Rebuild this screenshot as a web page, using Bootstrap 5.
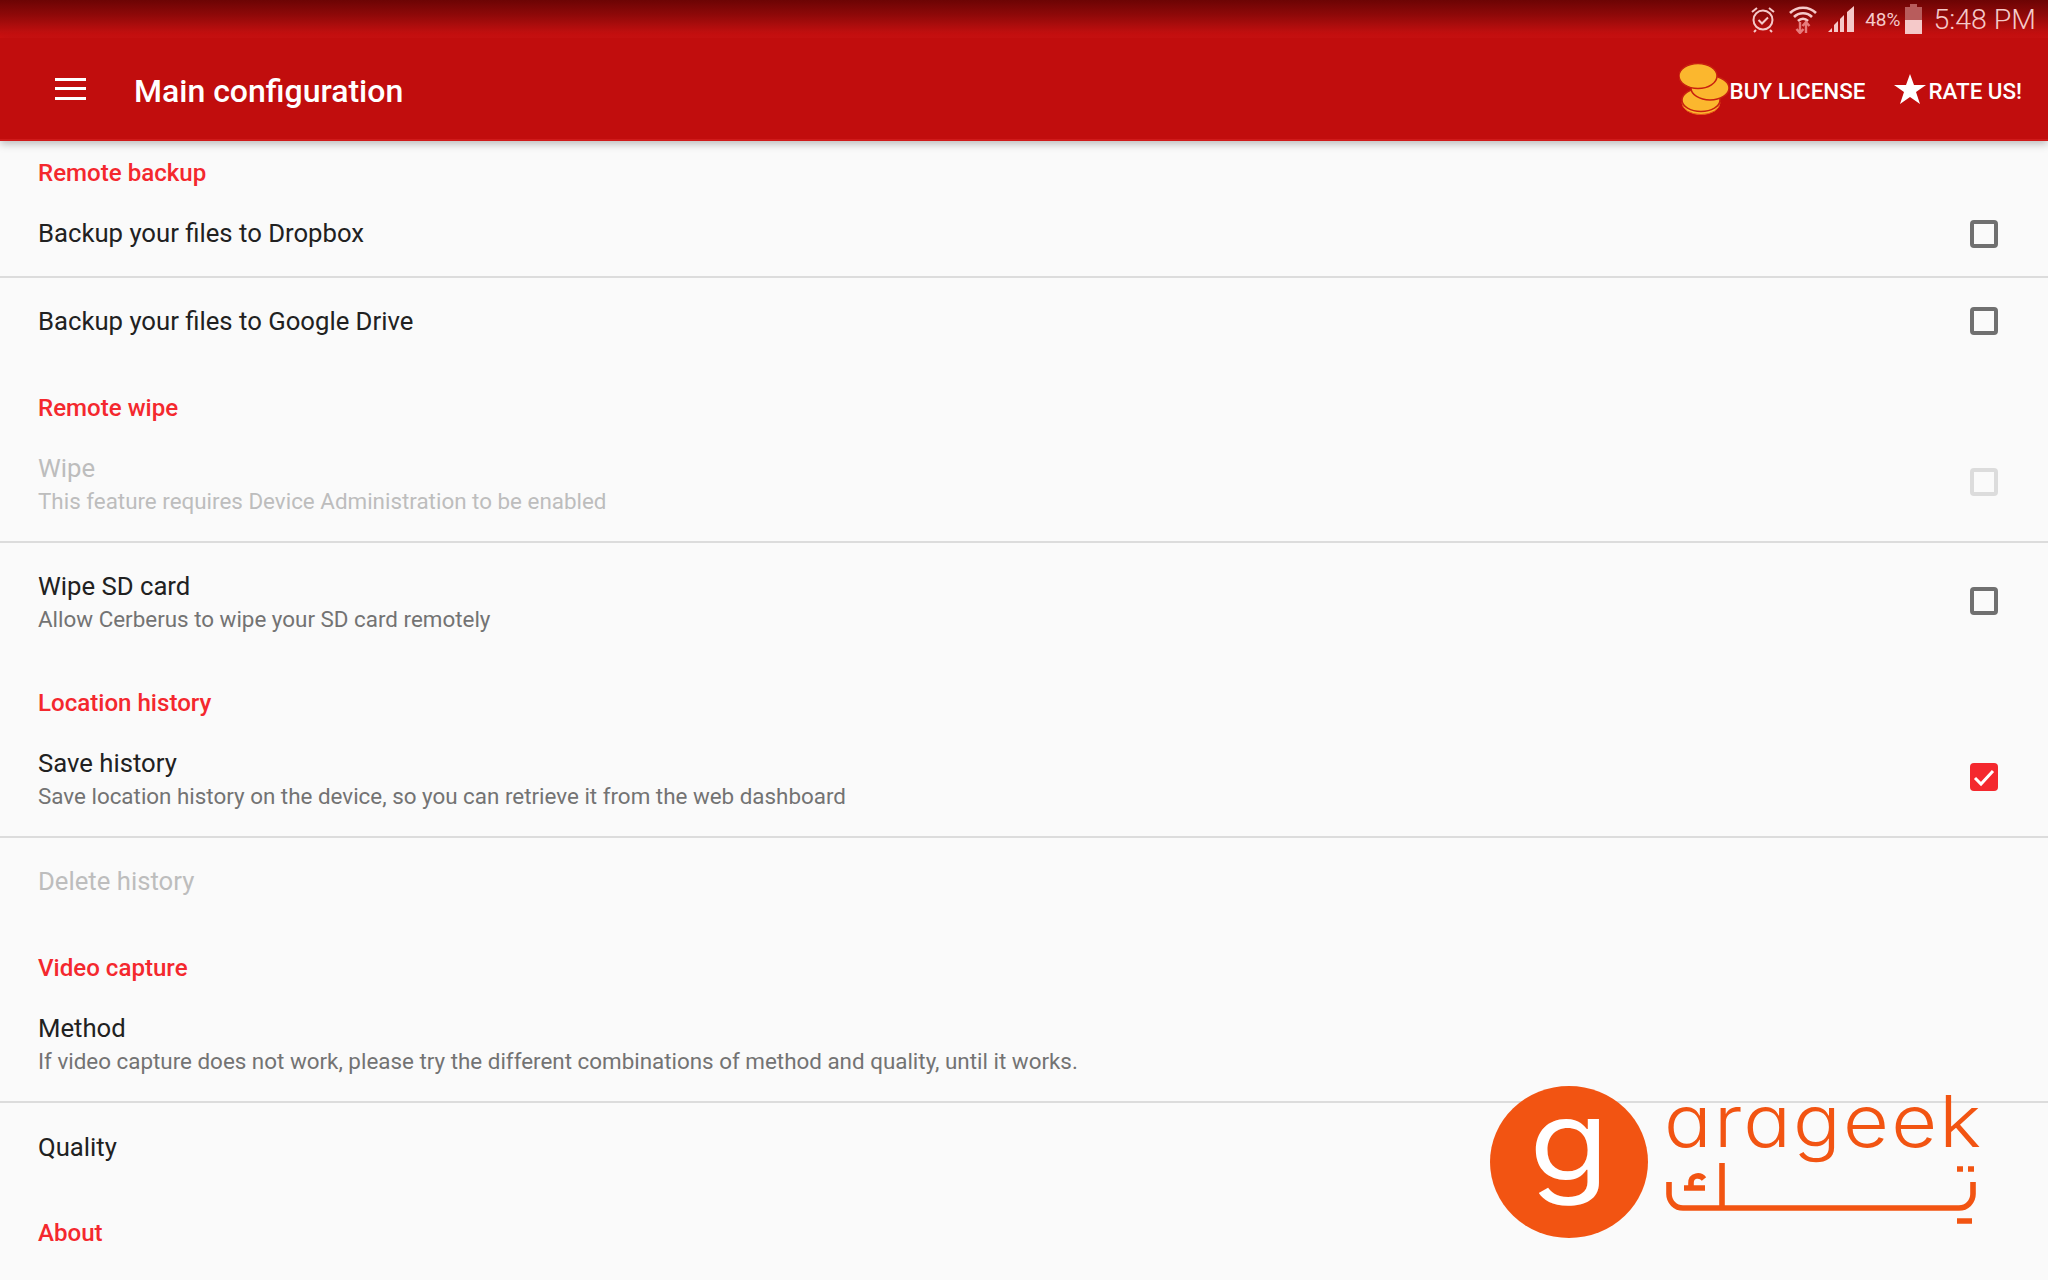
<!doctype html>
<html lang="en"><head><meta charset="utf-8"><title>Main configuration</title>
<link href="https://cdn.jsdelivr.net/npm/bootstrap@5.3.0/dist/css/bootstrap.min.css" rel="stylesheet">
<style>
html,body{height:1280px;overflow:hidden}
body{background:#fafafa;font-family:Roboto,"Liberation Sans",sans-serif;position:relative}
.statusbar{height:38px;background:linear-gradient(#6c0404,#8f0909 40%,#d01111);color:#f5c9c9;padding-right:12px}
.st-wifi{margin-left:12px}
.st-signal{margin-left:10px}
.st-pct{margin-left:10px;font-size:19px;line-height:1}
.st-batt{margin-left:5px}
.st-clock{margin-left:11px;font-size:28.5px;font-weight:300;line-height:1;padding-top:3px}
.appbar{height:103px;background:#c10d0d;border-bottom:2px solid #cf1a1a;box-shadow:0 3px 8px rgba(0,0,0,.25);padding:0 26px 0 55px;position:relative;z-index:2}
.burger{width:31px;height:22px;border-top:3px solid #fff;border-bottom:3px solid #fff;position:relative;margin-right:48px}
.burger::after{content:"";position:absolute;left:0;right:0;top:6.500px;height:3px;background:#fff}
.apptitle{font-size:32px;font-weight:500;color:#fff;line-height:1;padding-top:5px}
.appaction{font-size:22.4px;font-weight:500;color:#fff;line-height:1}
.appaction span{padding-top:6px}
.action-star{margin-left:29px;margin-right:2px;margin-top:1px}
.sec-head{height:59px;padding:0 38px;color:#f4282e;font-size:24.1px;font-weight:500;line-height:30px}
.sec-first{height:47px}
.sec-last{height:57px}
.pref{padding:0 50px 0 38px}
.pref-1{height:86px}
.pref-first{height:90px;padding-top:3px}
.pref-2{height:116px}
.pref-2.pref-sep{height:120px}
.pref-q{height:88px}
.pref-sep{border-bottom:2px solid #dcdcdc}
.pref-title{font-size:25.7px;line-height:33px;color:#212121}
.pref-sub{font-size:22.4px;line-height:32px;color:#737373}
.two-line{padding-top:5px}
.two-tight{padding-top:3px}
.is-off .pref-title,.is-off .pref-sub{color:#bdbdbd}
input.box{width:28px;height:28px;margin:0;border:4px solid #707070;border-radius:3px;background-color:transparent;opacity:1}
input.box:disabled{border-color:#dcdcdc;opacity:1}
input.box:checked{background-color:#f4282e;border:0;background-size:28px;background-image:url("data:image/svg+xml,%3csvg xmlns='http://www.w3.org/2000/svg' viewBox='0 0 28 28'%3e%3cpath fill='none' stroke='%23fff' stroke-width='3' d='M5 15l6 6 12-13'/%3e%3c/svg%3e")}
.brand-mark{position:absolute;left:1490px;top:1086px;width:158px;height:152px;border-radius:50%;background:#f25412;color:#fff;font-family:Inter,sans-serif;font-size:113px;font-weight:400;line-height:1;text-align:center}
.brand-mark span{display:block;margin-top:-2px;transform:scaleX(1.15);font-feature-settings:"cv11"}
.brand-word{position:absolute;left:1664px;top:1085px;color:#f25412;font-family:Inter,sans-serif;font-size:72px;font-weight:300;line-height:72px;letter-spacing:2px;transform:scaleX(1.1);transform-origin:left center;font-feature-settings:"cv11";white-space:nowrap}
.brand-line{position:absolute;left:1664px;top:1160px}
</style></head>
<body>
<div class="statusbar d-flex align-items-center justify-content-end">
  <svg width="26" height="30" viewBox="0 0 26 30" fill="none" stroke="#f5c9c9" stroke-width="2"><circle cx="13" cy="16" r="9.500"/><path d="M8.500 16l3.500 3.500 6-6M2 8l5-4M24 8l-5-4M6 26l-2 2M20 26l2 2"/></svg>
  <svg width="30" height="30" viewBox="0 0 30 30" class="st-wifi" fill="none" stroke="#f5c9c9" stroke-width="2.600"><path d="M2 9c7-7 19-7 26 0M6 13c5-5 13-5 18 0M10 17c3-3 7-3 10 0"/><path d="M12 18v11M8.500 25l3.500 4 3.500-4M18 29V18M14.500 22l3.500-4 3.500 4" stroke="#e77c7c" stroke-width="2.400"/></svg>
  <svg width="27" height="27" viewBox="0 0 27 27" class="st-signal" fill="#f5c9c9"><polygon points="0,26 4,22 4,26"/><polygon points="6,26 6,19 10,15 10,26"/><polygon points="12,26 12,13 16,9 16,26"/><polygon points="19,26 19,6 26,0 26,26"/></svg>
  <span class="st-pct">48%</span>
  <svg width="17" height="30" viewBox="0 0 17 30" class="st-batt"><path d="M5 0h7v3h5v13H0V3h5z" fill="#b85c5c"/><rect y="16" width="17" height="14" fill="#f5c9c9"/></svg>
  <span class="st-clock">5:48 PM</span>
</div>
<nav class="navbar appbar d-flex align-items-center flex-nowrap">
  <div class="burger"></div>
  <div class="apptitle flex-grow-1">Main configuration</div>
  <div class="d-flex align-items-center appaction">
    <svg width="51" height="52" viewBox="0 0 51 52"><ellipse cx="22" cy="40" rx="19" ry="11.500" fill="#fbb72e" stroke="#e8541a" stroke-width="1"/><ellipse cx="22" cy="37" rx="19" ry="11.500" fill="#fbb72e" stroke="#c8200f" stroke-width="1.500"/><ellipse cx="31" cy="25" rx="19" ry="12" fill="#fbb72e" stroke="#c8200f" stroke-width="1.500"/><ellipse cx="19" cy="13" rx="19" ry="12.500" fill="#fbb72e" stroke="#c8200f" stroke-width="1.500"/></svg>
    <span>BUY LICENSE</span>
    <svg width="32" height="31" viewBox="0 0 32 31" class="action-star"><polygon fill="#fff" points="16,0 20,11 32,11 22,18 26,30 16,23 6,30 10,18 0,11 12,11"/></svg>
    <span>RATE US!</span>
  </div>
</nav>
<main>
  <div class="sec-head sec-first d-flex align-items-end">Remote backup</div>
  <div class="pref pref-first pref-sep d-flex align-items-center justify-content-between"><div class="pref-title">Backup your files to Dropbox</div><input class="form-check-input box" type="checkbox"></div>
  <div class="pref pref-1 d-flex align-items-center justify-content-between"><div class="pref-title">Backup your files to Google Drive</div><input class="form-check-input box" type="checkbox"></div>

  <div class="sec-head d-flex align-items-end">Remote wipe</div>
  <div class="pref pref-2 pref-sep is-off d-flex align-items-center justify-content-between"><div class="two-line"><div class="pref-title">Wipe</div><div class="pref-sub">This feature requires Device Administration to be enabled</div></div><input class="form-check-input box" type="checkbox" disabled></div>
  <div class="pref pref-2 d-flex align-items-center justify-content-between"><div class="two-tight"><div class="pref-title">Wipe SD card</div><div class="pref-sub">Allow Cerberus to wipe your SD card remotely</div></div><input class="form-check-input box" type="checkbox"></div>

  <div class="sec-head d-flex align-items-end">Location history</div>
  <div class="pref pref-2 pref-sep d-flex align-items-center justify-content-between"><div class="two-line"><div class="pref-title">Save history</div><div class="pref-sub">Save location history on the device, so you can retrieve it from the web dashboard</div></div><input class="form-check-input box" type="checkbox" checked></div>
  <div class="pref pref-1 is-off d-flex align-items-center"><div class="pref-title">Delete history</div></div>

  <div class="sec-head d-flex align-items-end">Video capture</div>
  <div class="pref pref-2 pref-sep d-flex align-items-center"><div class="two-line"><div class="pref-title">Method</div><div class="pref-sub">If video capture does not work, please try the different combinations of method and quality, until it works.</div></div></div>
  <div class="pref pref-q d-flex align-items-center"><div class="pref-title">Quality</div></div>

  <div class="sec-head sec-last d-flex align-items-end">About</div>
</main>
<div class="brand-mark"><span>g</span></div>
<div class="brand-word">arageek</div>
<svg class="brand-line" width="320" height="70" viewBox="0 0 320 70" fill="none" stroke="#f25412" stroke-width="5.600">
  <path d="M5 22v12a14 14 0 0 0 14 14h276a14 14 0 0 0 14-14V22"/>
  <path d="M58 3v45"/>
  <path d="M20 28h21M27 28v-5c0-8 9-9 13-4"/>
  <path d="M293 9h6M304 9h6M293 61h15"/>
</svg>
</body></html>
